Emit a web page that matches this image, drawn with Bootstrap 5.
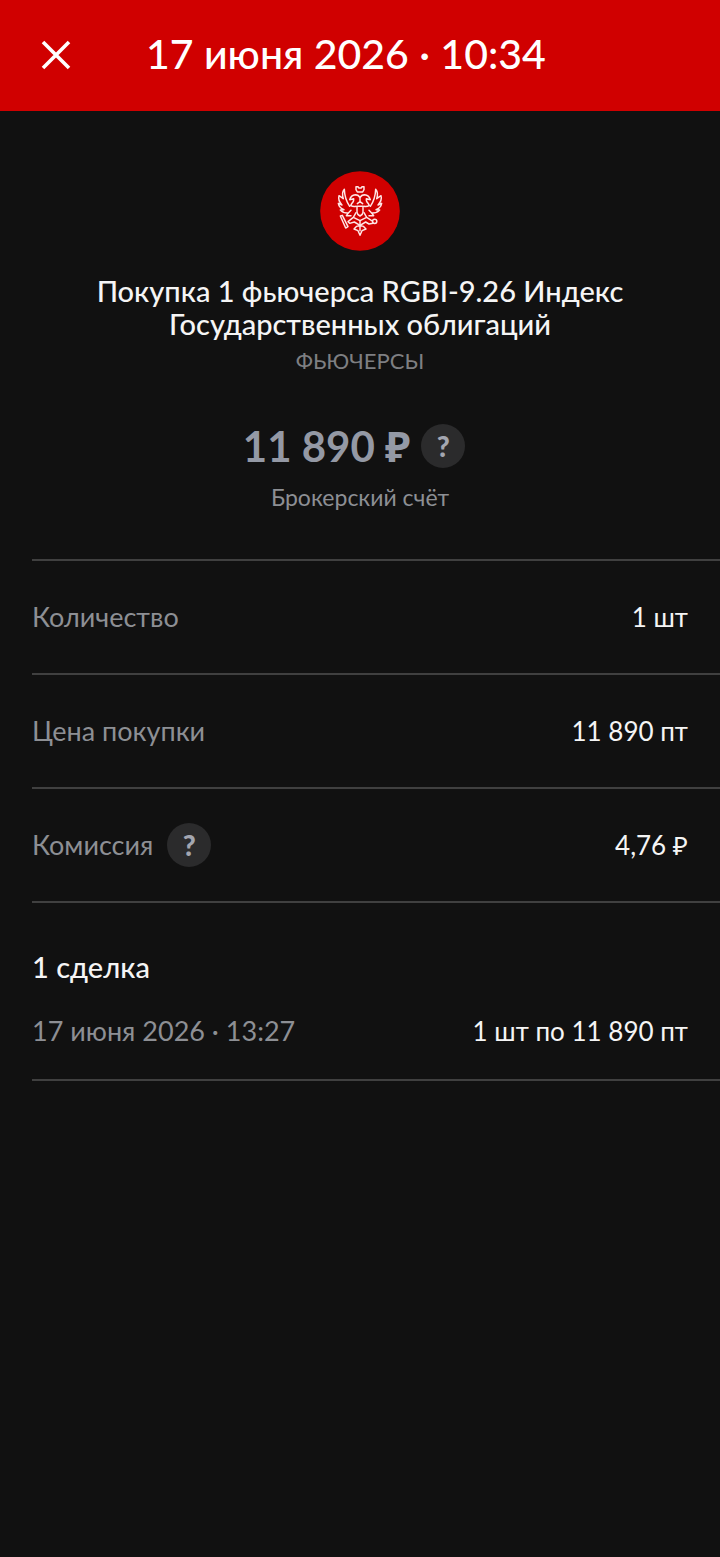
<!DOCTYPE html>
<html lang="ru">
<head>
<meta charset="utf-8">
<meta name="viewport" content="width=device-width, initial-scale=1">
<title>Покупка RGBI-9.26</title>
<link href="https://cdn.jsdelivr.net/npm/bootstrap@5.3.0/dist/css/bootstrap.min.css" rel="stylesheet">
<style>
body{background:#111;color:#f5f5f5;font-family:Lato,"Noto Sans",sans-serif;font-size:26px;line-height:36px}
.topbar{background:#d00000;color:#fff;padding:30px 36px 33px;gap:70px}
.topbar h1{font-size:41px;line-height:48px;font-weight:500}
.close-btn{width:40px;height:40px}
.summary{padding:60px 64px 46px}
.emblem{width:80px;height:80px}
.deal-title{font-size:29px;line-height:33px;font-weight:500;margin-top:23px}
.note{line-height:32px}
.dim{color:#8d8f94}
.account{font-size:23px;margin-top:11px}
.kind{color:#7e7f82;font-size:22px;margin-top:5px}
.amount{color:#9499a5;font-size:42px;line-height:48px;font-weight:700}
.total{margin-top:45px;gap:11px;padding-right:12px}
.help-btn{width:44px;height:44px;background:#2b2b2c;color:#a3a6b0;font-size:28px;line-height:44px;font-weight:900}
.details{margin-left:32px;border-top:2px solid #404040}
.line-row{border-bottom:2px solid #404040;padding-right:32px}
.line-row .dim{font-size:27px}
.details>.line-row{min-height:114px}
.fee-label{gap:14px}
.deals{margin-left:32px;padding-top:46px}
.deals h3{font-size:29px;line-height:36px;font-weight:500;margin-bottom:28px}
.deal-item{padding-bottom:30px}
</style>
</head>
<body>
<header class="topbar d-flex align-items-center">
  <button type="button" class="close-btn btn p-0 border-0 text-white d-flex align-items-center justify-content-center" aria-label="Закрыть">
    <svg width="30" height="32" viewBox="0 0 30 32" fill="none" stroke="currentColor" stroke-width="3.6"><path d="M2 4 28 30M28 4 2 30"/></svg>
  </button>
  <h1 class="mb-0">17 июня 2026 · 10:34</h1>
</header>
<main>
  <section class="summary d-flex flex-column align-items-center text-center">
    <svg class="emblem" viewBox="30 33 240 240" fill="none" stroke="#ffe6e6" stroke-width="4.4" stroke-linejoin="round" stroke-linecap="round" aria-hidden="true">
      <circle cx="150" cy="153" r="119.5" fill="#d00000" stroke="none"/>
      <!-- crown -->
      <path d="M138 80h6l2 4h8l2-4h6v9l-4 7h-16l-4-7z"/>
      <!-- heads and shield -->
      <path d="M150 113q-4-9-14-9-13 1-17 15l12-3q1 10-6 15l-3 6q8 4 16 2M150 113q4-9 14-9 13 1 17 15l-12-3q-1 10 6 15l3 6q-8 4-16 2M150 113v12l-8 6M150 125l8 6M141 139h18v18q0 6-9 11-9-5-9-11z"/>
      <!-- wings -->
      <path d="M119 139Q104 118 103 88q-9 10-3 28M100 116l-13-9q-4 14 9 28M96 135l-11-5q2 13 17 19M102 149l-11 1q9 10 24 9l8-8M115 159l-6 8h14M181 139q15-21 16-51 9 10 3 28M200 116l13-9q4 14-9 28M204 135l11-5q-2 13-17 19M198 149l11 1q-9 10-24 9l-8-8M185 159l6 8h-14"/>
      <!-- legs, sceptre and orb -->
      <path d="M138 158l-8 14-16 13 5 5 14-4 17 10M162 158l8 14 14 9 4 2M150 196l17-10 10 6 12-2M130 172l20 10 20-10M91 168l6-2 17 34-7 4z"/>
      <circle cx="194" cy="184" r="6.5"/>
      <!-- tail -->
      <path d="M150 196l-10 3-8 8 12 5 6 14 6-14 12-5-8-8zM150 182v30"/>
    </svg>
    <h2 class="deal-title mb-0">Покупка 1 фьючерса RGBI-9.26 Индекс Государственных облигаций</h2>
    <p class="note kind mb-0">ФЬЮЧЕРСЫ</p>
    <div class="total d-flex align-items-center justify-content-center">
      <span class="amount">11 890 ₽</span>
      <button type="button" class="help-btn btn rounded-circle border-0 p-0" aria-label="Подробнее о сумме">?</button>
    </div>
    <p class="note account dim mb-0">Брокерский счёт</p>
  </section>
  <section class="details">
    <div class="line-row d-flex align-items-center justify-content-between"><span class="dim">Количество</span><span>1 шт</span></div>
    <div class="line-row d-flex align-items-center justify-content-between"><span class="dim">Цена покупки</span><span>11 890 пт</span></div>
    <div class="line-row d-flex align-items-center justify-content-between">
      <span class="fee-label dim d-flex align-items-center">Комиссия
        <button type="button" class="help-btn btn rounded-circle border-0 p-0" aria-label="Подробнее о комиссии">?</button></span>
      <span>4,76 ₽</span>
    </div>
  </section>
  <section class="deals">
    <h3>1 сделка</h3>
    <div class="line-row deal-item d-flex align-items-center justify-content-between"><span class="dim">17 июня 2026 · 13:27</span><span>1 шт по 11 890 пт</span></div>
  </section>
</main>
<script src="https://cdn.jsdelivr.net/npm/bootstrap@5.3.0/dist/js/bootstrap.bundle.min.js"></script>
</body>
</html>
